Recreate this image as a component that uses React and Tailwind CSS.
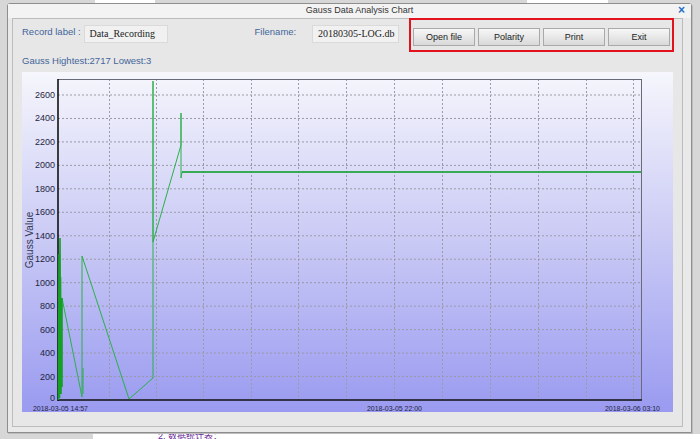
import React from 'react';

const FONT = { fontFamily: '"Liberation Sans", Arial, sans-serif' };

const V_GRID = [87, 134, 181, 229, 276, 324, 372, 420, 468, 516, 564, 611];
const Y_TICKS = [0, 200, 400, 600, 800, 1000, 1200, 1400, 1600, 1800, 2000, 2200, 2400, 2600];
const yOf = (v) => 328 - v * 0.11731;

const PLOT = { left: 36, top: 7, right: 619, bottom: 328 };

// green trace, panel-local coordinates
const TRACE =
  'M40,226 L60,325 L60,184 L107,327 L131,306 L131,9 L131,170 L159,73 L159,41 L159,106 L160,100 L619,100';
const CLUSTER =
  'M36.5,328 L37,182 L37.5,326 L38,166 L38.5,300 L38.5,205 L39,322 L39.5,226 L40,315 L40,226';

function Chart() {
  return (
    <div className="w-[651px] h-[340px] bg-gradient-to-b from-[#f6f6fc] via-[#c9c9f5] to-[#9a9af0]">
      <svg width="651" height="340" style={FONT}>
        {/* grid */}
        {Y_TICKS.slice(1).map((v) => (
          <line key={v} x1={PLOT.left} x2={PLOT.right} y1={yOf(v)} y2={yOf(v)} stroke="#9a9aa8" strokeWidth="1" strokeDasharray="2 2" />
        ))}
        {V_GRID.map((x) => (
          <line key={x} x1={x + 0.5} x2={x + 0.5} y1={PLOT.top} y2={PLOT.bottom + 3} stroke="#9a9aa8" strokeWidth="1" strokeDasharray="2 2" />
        ))}
        {/* frame */}
        <line x1={PLOT.left} x2={PLOT.right} y1={PLOT.top + 0.5} y2={PLOT.top + 0.5} stroke="#6a6a78" strokeWidth="1" />
        <line x1={PLOT.right + 0.5} x2={PLOT.right + 0.5} y1={PLOT.top} y2={PLOT.bottom} stroke="#6a6a78" strokeWidth="1" />
        <line x1={PLOT.left} x2={PLOT.left} y1={PLOT.top} y2={PLOT.bottom + 1} stroke="#111" strokeWidth="1.6" />
        <line x1={PLOT.left} x2={PLOT.right + 1} y1={PLOT.bottom} y2={PLOT.bottom} stroke="#111" strokeWidth="1.6" />
        {/* y labels */}
        {Y_TICKS.map((v) => (
          <text key={v} x="33" y={yOf(v) + (v === 0 ? 1 : 3)} textAnchor="end" fontSize="9" fill="#1f2640">
            {v}
          </text>
        ))}
        <text transform="translate(11,168) rotate(-90)" textAnchor="middle" fontSize="10" fill="#2e3550">
          Gauss Value
        </text>
        {/* x labels */}
        <text x="11" y="339" fontSize="8" fill="#1f2640" textLength="55" lengthAdjust="spacingAndGlyphs">2018-03-05 14:57</text>
        <text x="345" y="339" fontSize="8" fill="#1f2640" textLength="55" lengthAdjust="spacingAndGlyphs">2018-03-05 22:00</text>
        <text x="583" y="339" fontSize="8" fill="#1f2640" textLength="55" lengthAdjust="spacingAndGlyphs">2018-03-06 03:10</text>
        {/* data */}
        <path d={TRACE} fill="none" stroke="#2bb04a" strokeWidth="1" />
        <path d="M61,296 L61,322" fill="none" stroke="#2bb04a" strokeWidth="1" />
        <path d="M160,100 L619,100" fill="none" stroke="#1ea23c" strokeWidth="1.6" />
        <path d={CLUSTER} fill="none" stroke="#15a025" strokeWidth="1.6" />
      </svg>
    </div>
  );
}

function Field({ value, width }) {
  return (
    <div
      className={`h-[18px] ${width} bg-[#f1f1f1] border border-[#dadada] flex items-center pl-[5px] text-[10px] text-[#222] whitespace-nowrap overflow-hidden`}
      style={{ fontFamily: '"Liberation Serif", "Times New Roman", serif' }}
    >
      {value}
    </div>
  );
}

function Btn({ label }) {
  return (
    <button className="w-[62px] h-[18px] bg-gradient-to-b from-[#f7f7f7] to-[#d9d9d9] border border-[#a9a9a9] text-[9px] text-[#222] leading-none">
      {label}
    </button>
  );
}

export default function App() {
  return (
    <div className="relative w-[700px] h-[439px] overflow-hidden bg-[#d7d7d7]" style={FONT}>
      {/* desktop behind the dialog */}
      <div className="absolute left-[95px] top-0 w-[60px] h-[3px] bg-white" />
      <div className="absolute left-[527px] top-0 w-[81px] h-[3px] bg-white" />
      <div className="absolute left-[93px] top-[434px] w-[607px] h-[5px] bg-white" />
      <div
        className="absolute left-[158px] top-[431px] text-[9px] leading-[10px] text-[#6a2a9a]"
        style={{ fontFamily: '"Liberation Sans", "Noto Sans CJK SC", sans-serif' }}
      >
        2. 数据统计表：
      </div>

      {/* dialog */}
      <div className="relative ml-[7px] mt-[3px] w-[685px] h-[430px] border border-[#8e8e8e] rounded-t-[3px] bg-[#e9e9e9] flex flex-col shadow-[1px_1px_0_#bdbdbd]">
        <div className="h-[14px] bg-[#f3f3f3] flex items-center relative">
          <div className="flex-1 text-center text-[9px] text-[#333] pl-[20px]">Gauss Data Analysis Chart</div>
          <div className="absolute right-[6px] top-[-1px] text-[12px] font-bold text-[#1d6fc9] leading-[14px]">×</div>
        </div>
        <div className="flex-1 pl-[4px] pr-[8px] pb-[5px]">
          <div className="h-full border border-[#bcbcbc] bg-[#e7e7e7] pl-[9px] pr-[8px] flex flex-col">
            {/* header */}
            <div className="h-[34px] -mt-px flex items-center">
              <div className="w-[62px] text-[9.5px] text-[#43659a] -mt-[5px]">Record label :</div>
              <div className="-mt-[3px]"><Field value="Data_Recording" width="w-[84px]" /></div>
              <div className="ml-[87px] w-[58px] text-[9.5px] text-[#43659a] -mt-[5px]">Filename:</div>
              <div className="-mt-[3px]"><Field value="20180305-LOG.db" width="w-[87px]" /></div>
              <div className="ml-[10px] w-[267px] h-[34px] border-2 border-[#e3121c] pt-[8px] pl-[2px] flex gap-[3px] items-start">
                <Btn label="Open file" />
                <Btn label="Polarity" />
                <Btn label="Print" />
                <Btn label="Exit" />
              </div>
            </div>
            <div className="mt-[3px] h-[12px] text-[9.5px] leading-[12px] text-[#43659a]">Gauss Hightest:2717 Lowest:3</div>
            <div className="mt-[5px]">
              <Chart />
            </div>
          </div>
        </div>
      </div>
    </div>
  );
}
